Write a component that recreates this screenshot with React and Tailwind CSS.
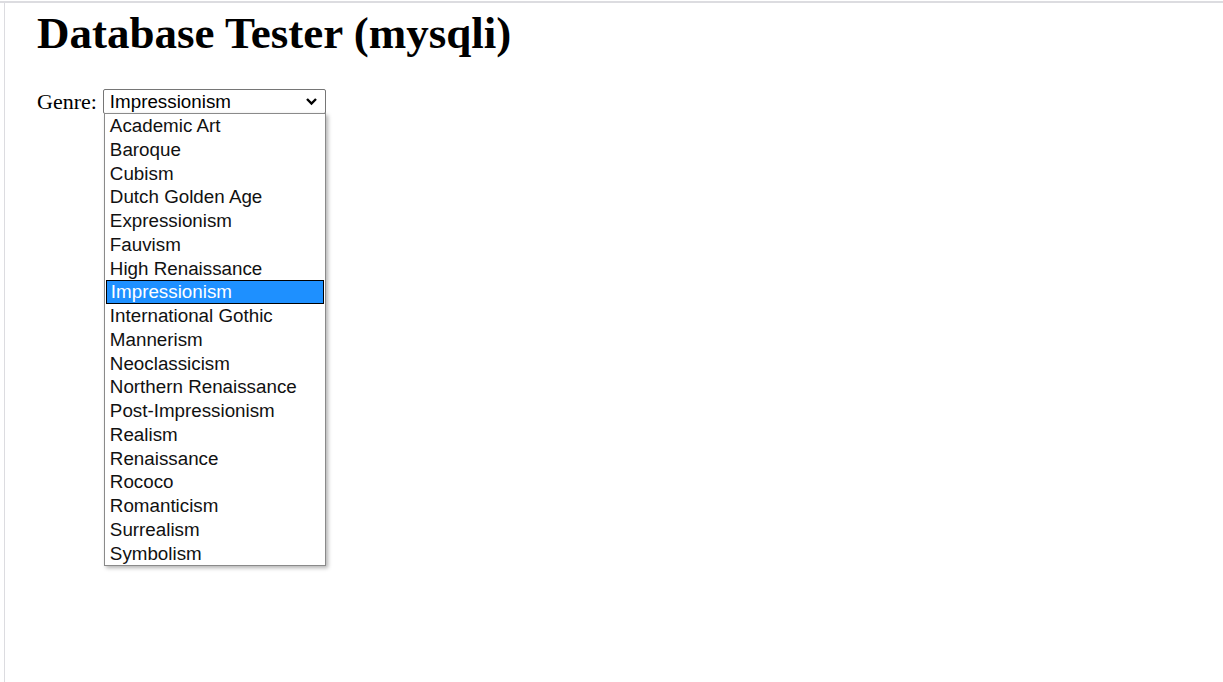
const genres = [
  "Academic Art",
  "Baroque",
  "Cubism",
  "Dutch Golden Age",
  "Expressionism",
  "Fauvism",
  "High Renaissance",
  "Impressionism",
  "International Gothic",
  "Mannerism",
  "Neoclassicism",
  "Northern Renaissance",
  "Post-Impressionism",
  "Realism",
  "Renaissance",
  "Rococo",
  "Romanticism",
  "Surrealism",
  "Symbolism",
];

export default function App() {
  const selected = "Impressionism";

  return (
    <div className="w-full h-[682px] bg-white pt-px overflow-hidden">
      <div className="h-full border-t-2 border-[#dcdce0] pl-1">
        <div className="h-full border-l border-[#dcdce0] pl-8 pt-[6px] text-black font-['Liberation_Serif',serif]">
          {/* Heading */}
          <h1 className="text-[45px] leading-[48px] font-bold">
            Database Tester (mysqli)
          </h1>

          {/* Genre select */}
          <div className="mt-[32px] flex items-center text-[22px] leading-[24px]">
            <span className="mr-[6px] mt-px">Genre:</span>
            <div className="relative">
              <div className="w-[223px] h-[25px] border border-[#767676] rounded-[2px] flex items-center justify-between pl-[6px] pr-[6px] font-['Liberation_Sans',sans-serif] text-[18.8px]">
                <span className="mt-px">{selected}</span>
                <svg width="13" height="9" viewBox="0 0 13 9" className="mr-[1px]">
                  <path
                    d="M2 2 L6.5 6.5 L11 2"
                    fill="none"
                    stroke="#000"
                    strokeWidth="2.4"
                  />
                </svg>
              </div>

              {/* Open option list */}
              <div className="absolute left-px top-[24px] w-[222px] bg-white border border-[#8a8a8a] shadow-[2px_2px_4px_rgba(0,0,0,0.3)] font-['Liberation_Sans',sans-serif] text-[18.8px] text-[#111]">
                {genres.map((g) => (
                  <div
                    key={g}
                    className={
                      g === selected
                        ? "h-[23.75px] leading-[21px] pl-[4px] mx-px bg-[#1e90ff] text-white border border-black"
                        : "h-[23.75px] leading-[23.75px] pl-[5px]"
                    }
                  >
                    {g}
                  </div>
                ))}
              </div>
            </div>
          </div>
        </div>
      </div>
    </div>
  );
}
